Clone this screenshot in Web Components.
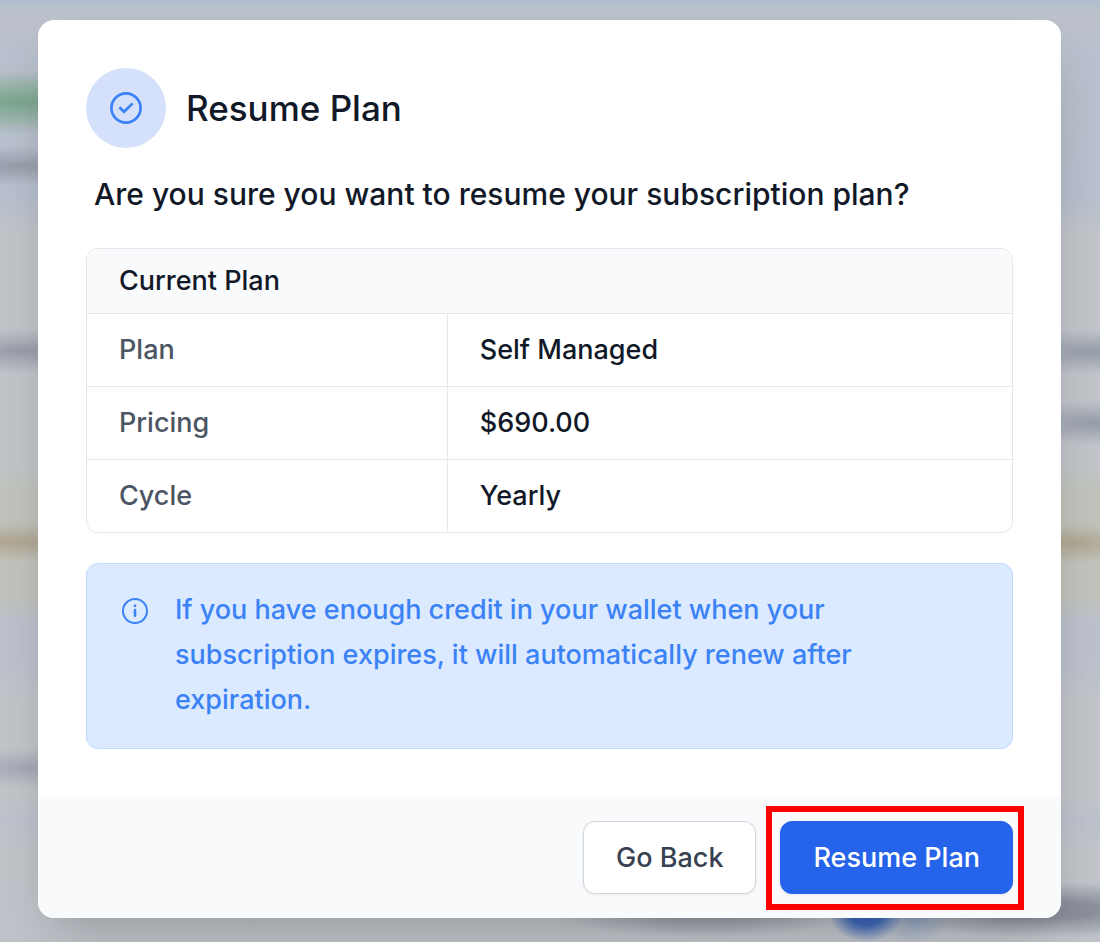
<!DOCTYPE html>
<html lang="en">
<head>
<meta charset="utf-8">
<meta name="viewport" content="width=device-width, initial-scale=1">
<title>Resume Plan</title>
<style>
  body {
    margin: 0;
    font-family: Inter, "Liberation Sans", sans-serif;
    font-size: 27px;
    font-weight: 500;
    color: #111827;
  }
</style>
</head>
<body>
<modal-backdrop>
  <modal-dialog heading="Resume Plan">
    <p slot="question">Are you sure you want to resume your subscription plan?</p>
    <plan-table heading="Current Plan"></plan-table>
    <info-alert>If you have enough credit in your wallet when your subscription expires, it will automatically renew after expiration.</info-alert>
    <action-button slot="actions">Go Back</action-button>
    <action-button slot="actions" variant="primary" highlighted>Resume Plan</action-button>
  </modal-dialog>
</modal-backdrop>

<script>
/** Creates a template from a markup string.
  * @param {string} markup
  * @returns {HTMLTemplateElement}
  */
function createTemplate (markup) {
  const template = document.createElement('template')
  template.innerHTML = markup
  return template
}

/** Base class, clones the template of the subclass in an open shadow root. */
class TemplateElement extends HTMLElement {
  constructor () {
    super()
    this._shadowRoot = this.attachShadow({ mode: 'open' })
    this._shadowRoot.appendChild(this.constructor.template.content.cloneNode(true))
  }
}

/** The dimmed and blurred page behind the dialog. */
class ModalBackdrop extends TemplateElement {}
ModalBackdrop.template = createTemplate(`
  <style>
    :host {
      display: block;
      box-sizing: border-box;
      min-height: 100vh;
      padding: 20px 39px 24px 38px;
      background:
        radial-gradient(200px 32px at 20px 102px, #7ba68e 0, #8bae9ccc 45%, #8bae9c00),
        radial-gradient(200px 20px at 20px 166px, #979daa 0, #979daa00),
        radial-gradient(120px 22px at 20px 351px, #979caa 0, #979caa00),
        radial-gradient(160px 20px at 10px 542px, #b0a691 0, #b0a69100),
        radial-gradient(120px 20px at 30px 768px, #a3a8b4 0, #a3a8b400),
        radial-gradient(100px 22px at calc(100% - 4px) 352px, #959baa 0, #959baa00),
        radial-gradient(80px 22px at calc(100% - 4px) 423px, #959baa 0, #959baa00),
        radial-gradient(90px 20px at calc(100% - 26px) 543px, #b0a691 0, #b0a69100),
        radial-gradient(38px 30px at 866px calc(100% - 30px), #3460bd 0, #4068b8 45%, #4a70b800),
        radial-gradient(40px 30px at 914px calc(100% - 28px), #8c9fc0 0, #8c9fc000),
        radial-gradient(150px 26px at 705px calc(100% - 30px), #878c96 0, #878c9600),
        radial-gradient(180px 28px at calc(100% - 50px) calc(100% - 32px), #868b97 0, #8b909b 30%, #8b909b00),
        linear-gradient(#b0bdcf 0, #b8c2cc 9px, #bcc0cb 14px, #b9c0cd 50px, #b8bfcd 200px, #c0c4c9 232px,
          #c0c4c9 465px, #c0c3bc 490px, #c0c3bc 600px, #bbc0cc 622px, #bbc0cc 660px,
          #c0c4c9 700px, #c0c4c9 800px, #bcc1cc 820px, #c0c4c9 850px, #bfc3c9);
    }
  </style>
  <slot></slot>
`)

/** Dialog with an icon, a heading, its content and a bar of actions. */
class ModalDialog extends TemplateElement {
  connectedCallback () {
    this._shadowRoot.querySelector('h1').textContent = this.getAttribute('heading')
  }
}
ModalDialog.template = createTemplate(`
  <style>
    :host {
      display: block;
      border-radius: 16px;
      background: #fff;
      box-shadow: 0 24px 48px -16px rgba(0, 0, 0, .24);
    }

    .body {
      padding: 48px;
    }

    header {
      display: flex;
      align-items: center;
      gap: 20px;
    }

    .icon {
      display: flex;
      align-items: center;
      justify-content: center;
      width: 80px;
      height: 80px;
      border-radius: 50%;
      background: #d5e1fb;
    }

    h1 {
      margin: 0;
      font-size: 35px;
      font-weight: 500;
      line-height: 48px;
    }

    ::slotted(p) {
      margin: 24px 8px 32px;
      font-size: 30px;
      line-height: 44px;
    }

    footer {
      display: flex;
      justify-content: flex-end;
      gap: 24px;
      padding: 24px 48px;
      border-radius: 0 0 16px 16px;
      background: #f9fafb;
    }
  </style>
  <section role="dialog" aria-labelledby="heading">
    <div class="body">
      <header>
        <span class="icon">
          <svg width="34" height="34" viewBox="0 0 34 34" fill="none" stroke="#3b82f6" stroke-width="2.7" aria-hidden="true">
            <circle cx="17" cy="17" r="14.6"/>
            <path d="M10.4 16.2 L15 20.8 L23.6 12.4"/>
          </svg>
        </span>
        <h1 id="heading"></h1>
      </header>
      <slot name="question"></slot>
      <slot></slot>
    </div>
    <footer><slot name="actions"></slot></footer>
  </section>
`)

/** Bordered table with the details of the plan. */
class PlanTable extends TemplateElement {
  connectedCallback () {
    this._shadowRoot.querySelector('thead th').textContent = this.getAttribute('heading')
  }
}
PlanTable.template = createTemplate(`
  <style>
    :host {
      display: block;
      overflow: hidden;
      border: 1px solid #e5e7eb;
      border-radius: 12px;
    }

    table {
      width: 100%;
      table-layout: fixed;
      border-spacing: 0;
      line-height: 40px;
    }

    th, td {
      padding: 16px 32px;
      text-align: left;
      font-weight: 500;
    }

    thead th {
      padding: 12px 32px;
      background: #f9fafb;
    }

    tbody th, tbody td {
      border-top: 1px solid #e5e7eb;
    }

    tbody th {
      border-right: 1px solid #e5e7eb;
      color: #4b5563;
    }
  </style>
  <table>
    <colgroup><col style="width: 39%"><col></colgroup>
    <thead>
      <tr><th colspan="2" scope="colgroup"></th></tr>
    </thead>
    <tbody>
      <tr><th scope="row">Plan</th><td>Self Managed</td></tr>
      <tr><th scope="row">Pricing</th><td>$690.00</td></tr>
      <tr><th scope="row">Cycle</th><td>Yearly</td></tr>
    </tbody>
  </table>
`)

/** Blue box with an info icon in front of the text. */
class InfoAlert extends TemplateElement {}
InfoAlert.template = createTemplate(`
  <style>
    :host {
      display: flex;
      gap: 24px;
      margin-top: 30px;
      padding: 23px 32px 26px;
      border: 1px solid #bfdbfe;
      border-radius: 12px;
      background: #dbeafe;
      color: #3b82f6;
      line-height: 45px;
    }

    svg {
      flex: none;
      margin-top: 8px;
    }
  </style>
  <svg width="32" height="32" viewBox="0 0 32 32" fill="none" stroke="currentColor" stroke-width="2" aria-hidden="true">
    <circle cx="16" cy="16" r="12"/>
    <path d="M16 15 V20.8" stroke-width="2.6" stroke-linecap="round"/>
    <circle cx="16" cy="10.8" r="1.4" fill="currentColor" stroke="none"/>
  </svg>
  <span><slot></slot></span>
`)

/** Button of the dialog, with variant="primary" for the main action. */
class ActionButton extends TemplateElement {}
ActionButton.template = createTemplate(`
  <style>
    :host {
      display: block;
      position: relative;
    }

    button {
      padding: 15px 32px;
      border: 1px solid #d1d5db;
      border-radius: 12px;
      background: #fff;
      box-shadow: 0 1px 3px rgba(0, 0, 0, .08);
      font: inherit;
      line-height: 41px;
      color: #374151;
      cursor: pointer;
    }

    :host([variant="primary"]) button {
      border-color: #2563eb;
      background: #2563eb;
      color: #fff;
    }

    /* red frame that points the reader to the button */
    :host([highlighted])::after {
      content: "";
      position: absolute;
      inset: -15px -11px -16px -14px;
      border: 6px solid #f00;
      pointer-events: none;
    }
  </style>
  <button type="button"><slot></slot></button>
`)

window.customElements.define('modal-backdrop', ModalBackdrop)
window.customElements.define('modal-dialog', ModalDialog)
window.customElements.define('plan-table', PlanTable)
window.customElements.define('info-alert', InfoAlert)
window.customElements.define('action-button', ActionButton)
</script>
</body>
</html>
